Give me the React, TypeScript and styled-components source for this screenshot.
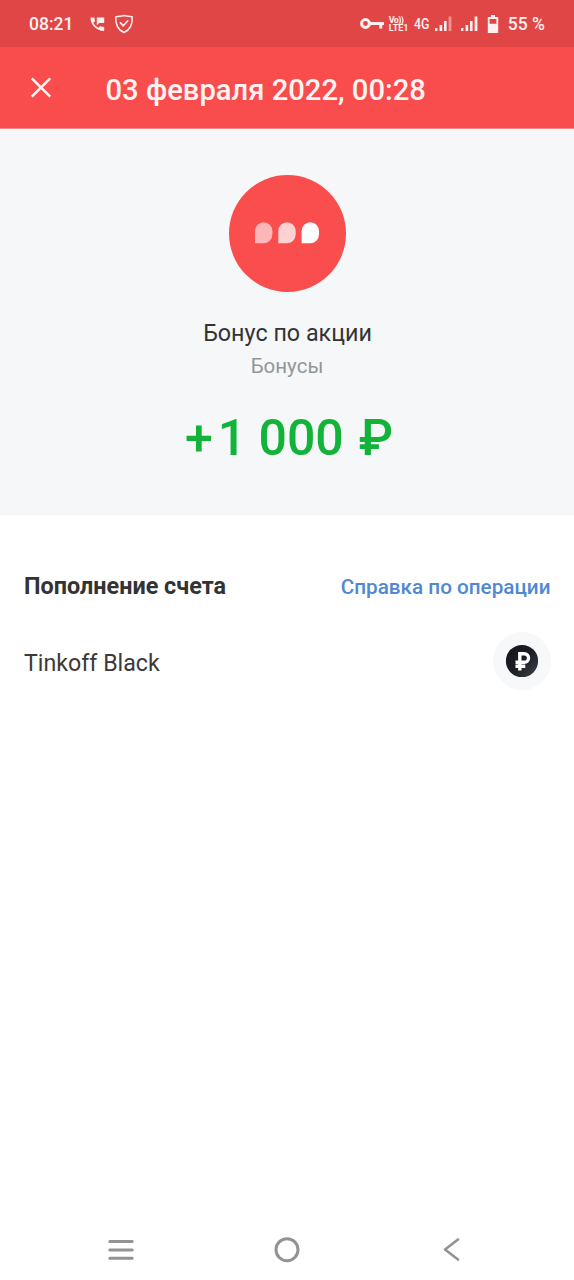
import React from "react";
import styled, { createGlobalStyle } from "styled-components";

const GlobalStyle = createGlobalStyle`
  html, body { margin: 0; padding: 0; background: #ffffff; }
  * { box-sizing: border-box; }
`;

const Screen = styled.div`
  width: 574px;
  height: 1280px;
  display: flex;
  flex-direction: column;
  overflow: hidden;
  background: #ffffff;
  font-family: Roboto, "Liberation Sans", sans-serif;
`;

const StatusBar = styled.div`
  flex: none;
  height: 47px;
  display: flex;
  align-items: center;
  justify-content: space-between;
  padding: 0 29px;
  background: #e04646;
  color: #fff0f0;
`;

const StatusGroup = styled.div<{ $gap?: number }>`
  display: flex;
  align-items: center;
  height: 47px;
  gap: ${(p) => p.$gap ?? 0}px;
  svg { display: block; flex: none; }
`;

const StatusText = styled.span`
  font-size: 17.5px;
  line-height: 22px;
  font-weight: 500;
  white-space: nowrap;
  padding-top: 1px;
`;

const NetworkType = styled.span`
  width: 16px;
  margin: 0 5px;
  font-size: 15.5px;
  line-height: 22px;
  font-weight: 500;
  white-space: nowrap;
  transform: scaleX(0.8);
  transform-origin: left center;
`;

const VolteBadge = styled.span`
  width: 20px;
  margin-left: 5px;
  display: flex;
  flex-direction: column;
  font-size: 9px;
  line-height: 8px;
  font-weight: 700;
  white-space: nowrap;
`;

const VolteTop = styled.span`
  letter-spacing: -0.7px;
`;

const VolteBottom = styled.span`
  letter-spacing: 0;
`;

const Header = styled.header`
  flex: none;
  height: 82px;
  display: flex;
  align-items: center;
  padding: 0 30px;
  background: #f94d4d;
  border-bottom: 1px solid #f58a8b;
`;

const CloseButton = styled.button`
  width: 75.5px;
  height: 40px;
  display: flex;
  align-items: center;
  padding: 0;
  border: 0;
  background: none;
`;

const HeaderTitle = styled.h1`
  margin: 0;
  padding-top: 4px;
  font-size: 29.2px;
  line-height: 36px;
  font-weight: 500;
  color: #fff4f3;
  white-space: nowrap;
`;

const Summary = styled.section`
  flex: none;
  height: 387px;
  display: flex;
  flex-direction: column;
  align-items: center;
  padding-top: 46px;
  background: #f5f7f9;
  border-bottom: 1px solid #fafbfc;
`;

const Brand = styled.div`
  width: 117px;
  height: 117px;
  display: flex;
  align-items: center;
  justify-content: center;
  padding-bottom: 2px;
  border-radius: 50%;
  background: #f94d4e;
`;

const Merchant = styled.div`
  margin-top: 25px;
  padding-left: 1px;
  font-size: 23.3px;
  line-height: 32px;
  color: #333333;
  white-space: nowrap;
`;

const Category = styled.div`
  margin-top: 3px;
  font-size: 20.5px;
  line-height: 28px;
  color: #929699;
  white-space: nowrap;
`;

const Amount = styled.div`
  margin-top: 28px;
  padding-left: 4px;
  display: flex;
  font-size: 50px;
  line-height: 60px;
  font-weight: 500;
  color: #12b338;
  white-space: nowrap;
`;

const Sign = styled.span`
  margin-right: 5px;
`;

const Currency = styled.span`
  margin-left: 15px;
`;

const Details = styled.main`
  flex: 1;
  padding: 54px 23.5px 0 24px;
`;

const Row = styled.div<{ $height: number }>`
  height: ${(p) => p.$height}px;
  display: flex;
  align-items: center;
  justify-content: space-between;
`;

const SectionTitle = styled.h2`
  margin: 0;
  font-size: 23.4px;
  line-height: 32px;
  font-weight: 700;
  color: #333333;
  white-space: nowrap;
`;

const HelpLink = styled.a`
  font-size: 20.7px;
  line-height: 28px;
  font-weight: 500;
  color: #5089d3;
  white-space: nowrap;
  padding-top: 2px;
`;

const AccountName = styled.span`
  font-size: 23.2px;
  line-height: 32px;
  color: #3a3a3a;
  padding-top: 3px;
`;

const AccountBadge = styled.div`
  width: 58px;
  height: 58px;
  display: flex;
  align-items: center;
  justify-content: center;
  border-radius: 50%;
  background: #f6f8fa;
`;

const NavBar = styled.nav`
  flex: none;
  height: 62px;
  display: flex;
  align-items: center;
  justify-content: space-between;
  padding: 1px 114px 0 108px;
  svg { display: block; }
`;

const HomeButton = styled.div`
  margin-right: 3px;
`;

const SignalIcon = ({ weak }: { weak?: boolean }) => (
  <svg width="17" height="16" viewBox="0 0 17 16" fill="currentColor">
    <rect x="0" y="12" width="2.4" height="3" />
    <rect x="4.6" y="9" width="2.6" height="6" />
    <rect x="9" y="5" width="2.6" height="10" />
    <rect x="13.6" y="0.5" width="2.8" height="14.5" opacity={weak ? 0.45 : 1} />
  </svg>
);

const App = () => (
  <>
    <GlobalStyle />
    <Screen>
      <StatusBar>
        <StatusGroup $gap={11}>
          <StatusText>08:21</StatusText>
          <StatusGroup $gap={9}>
            <svg width="21" height="14" viewBox="-6.5 0 21 14" fill="currentColor">
              <path d="M0 0.5H3.8L4.5 4.2L2.8 5.8C3.9 8 5.7 9.6 8 10.8L9.5 9.2L13.7 10V13.9C6.2 14 -0.2 8 0 0.5Z" />
              <path d="M6.3 0.5H13.7V6H8.8L6.3 8.2Z" />
            </svg>
            <svg width="20" height="20" viewBox="0 0 20 20" fill="none" stroke="currentColor" strokeLinejoin="round" strokeLinecap="round">
              <path d="M10 1.5C7.5 2.2 4.5 2.6 1.8 2.7C1.3 9.5 3.2 15.4 10 18.5C16.8 15.4 18.7 9.5 18.2 2.7C15.5 2.6 12.5 2.2 10 1.5Z" strokeWidth="1.5" />
              <path d="M6.5 8.8L9.3 11.8L13.8 6.8" strokeWidth="1.7" />
            </svg>
          </StatusGroup>
        </StatusGroup>
        <StatusGroup>
          <svg width="24" height="12" viewBox="0 0.5 24 12" fill="none" stroke="currentColor" strokeWidth="3">
            <circle cx="5.5" cy="6" r="3.9" />
            <path d="M9.5 6H24M20.8 6V11" />
          </svg>
          <VolteBadge>
            <VolteTop>Vo))</VolteTop>
            <VolteBottom>LTE1</VolteBottom>
          </VolteBadge>
          <NetworkType>4G</NetworkType>
          <StatusGroup $gap={9}>
            <SignalIcon weak />
            <SignalIcon />
            <svg width="12" height="18" viewBox="0 0 12 18">
              <path fill="currentColor" fillRule="evenodd" d="M4 0H8V2H11.2V18H0.8V2H4ZM2.6 4V8.7H9.4V4Z" />
            </svg>
            <StatusText>55 %</StatusText>
          </StatusGroup>
        </StatusGroup>
      </StatusBar>

      <Header>
        <CloseButton aria-label="Закрыть">
          <svg width="22" height="22" viewBox="0 0 22 22" fill="none" stroke="#fff4f3" strokeWidth="2.5">
            <path d="M1.8 1.3L20.2 19.7M20.2 1.3L1.8 19.7" />
          </svg>
        </CloseButton>
        <HeaderTitle>03 февраля 2022, 00:28</HeaderTitle>
      </Header>

      <Summary>
        <Brand>
          <svg width="66" height="22" viewBox="0 0 66 22" fill="#ffffff">
            <path opacity="0.6" d="M1 21.3V9.3A8.7 9.1 0 0 1 18.4 9.3V12.3A8.7 9 0 0 1 9.7 21.3Z" />
            <path opacity="0.75" d="M24.3 21.3V9.3A8.7 9.1 0 0 1 41.7 9.3V12.3A8.7 9 0 0 1 33 21.3Z" />
            <path d="M47.6 21.3V9.3A8.7 9.1 0 0 1 65 9.3V12.3A8.7 9 0 0 1 56.3 21.3Z" />
          </svg>
        </Brand>
        <Merchant>Бонус по акции</Merchant>
        <Category>Бонусы</Category>
        <Amount>
          <Sign>+</Sign>
          <span>1 000</span>
          <Currency>₽</Currency>
        </Amount>
      </Summary>

      <Details>
        <Row $height={32}>
          <SectionTitle>Пополнение счета</SectionTitle>
          <HelpLink>Справка по операции</HelpLink>
        </Row>
        <Row $height={118}>
          <AccountName>Tinkoff Black</AccountName>
          <AccountBadge>
            <svg width="34" height="34" viewBox="0 0 34 34">
              <defs>
                <linearGradient id="coin" x1="0" y1="0" x2="1" y2="1">
                  <stop offset="0" stopColor="#14161c" />
                  <stop offset="0.5" stopColor="#1a1d23" />
                  <stop offset="1" stopColor="#3e434b" />
                </linearGradient>
              </defs>
              <circle cx="17" cy="17" r="16.1" fill="url(#coin)" />
              <path d="M14.8 26.5V9.7H19.3A4.2 4.2 0 0 1 19.3 18.2H10.5M10.5 22.3H20.3" fill="none" stroke="#ffffff" strokeWidth="3.4" />
            </svg>
          </AccountBadge>
        </Row>
      </Details>

      <NavBar>
        <svg width="26" height="22" viewBox="0 0 26 22" stroke="#939393" strokeWidth="3" strokeLinecap="round">
          <path d="M1.8 2.5H24.2M1.8 11H24.2M1.8 19.3H24.2" />
        </svg>
        <HomeButton>
          <svg width="26" height="26" viewBox="0 0 26 26" fill="none" stroke="#939393" strokeWidth="3">
            <circle cx="13" cy="12.7" r="11" />
          </svg>
        </HomeButton>
        <svg width="17" height="24" viewBox="0 0.5 17 24" fill="none" stroke="#939393" strokeWidth="2.6" strokeLinecap="round" strokeLinejoin="round">
          <path d="M15 2L2 12L15 22" />
        </svg>
      </NavBar>
    </Screen>
  </>
);

export default App;
